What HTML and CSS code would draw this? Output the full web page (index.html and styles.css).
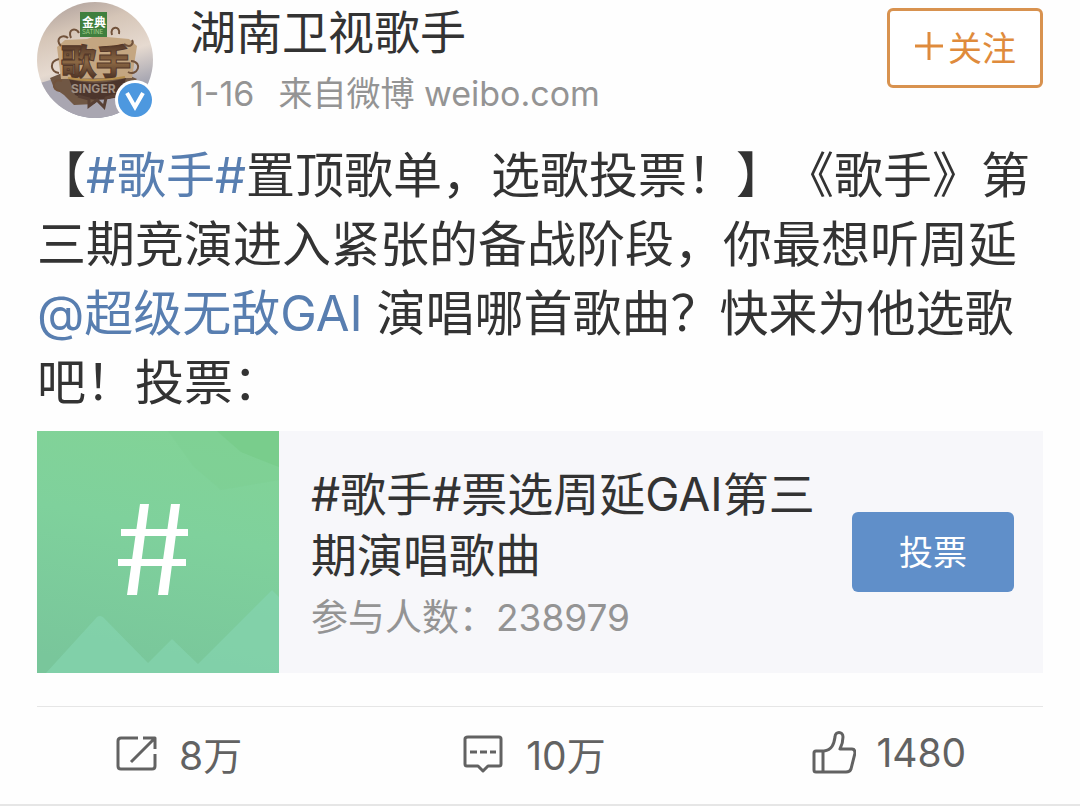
FILE: index.html
```
<!DOCTYPE html>
<html lang="zh-CN">
<head>
  <meta charset="UTF-8">
  <meta name="viewport" content="width=device-width, initial-scale=1.0">
  <title>湖南卫视歌手</title>
  <link rel="stylesheet" href="styles.css">
</head>
<body>
  <article class="post">
    <header class="post-header">
      <div class="avatar">
        <svg class="avatar-image" viewBox="0 0 116 116" aria-hidden="true">
          <defs>
            <linearGradient id="sky" x1="0" y1="0" x2="0.3" y2="1">
              <stop offset="0" stop-color="#a99b98"/>
              <stop offset="0.3" stop-color="#d5c5b7"/>
              <stop offset="0.6" stop-color="#e6dad0"/>
              <stop offset="1" stop-color="#8d91a5"/>
            </linearGradient>
            <linearGradient id="bronze" x1="0" y1="0" x2="0" y2="1">
              <stop offset="0" stop-color="#4b3024"/>
              <stop offset="0.5" stop-color="#8c6844"/>
              <stop offset="1" stop-color="#3c241c"/>
            </linearGradient>
            <clipPath id="round"><circle cx="58" cy="58" r="58"/></clipPath>
          </defs>
          <g clip-path="url(#round)">
            <rect width="116" height="116" fill="url(#sky)"/>
            <path d="M0 82l20-6 20 14 30 6 46-12v32H0z" fill="#a9a6b1"/>
            <path d="M13 76l12-5 66 2 9 4-13 12-20 3-10 10-20 1-10-10-10-7z" fill="#705744"/>
            <path d="M20 45l8-7 22-1 8-3 12 1 22 2 8 7-5 32-71 1z" fill="#c4a681"/>
            <path d="M24 44c-7-7 2-13 7-8M34 36c-4-9 5-11 8-5M75 33c-3-9 9-10 7-1M87 42c7 5 10-1 8-4M22 57c-10 2-9 13 0 14M94 59c13 1 6 16-3 11M25 79c-10-4-11 10-2 10" fill="none" stroke="#71523b" stroke-width="2"/>
            <path d="M32 77q27 8 57-1l-5 18q-24 8-46-1z" fill="#4c352c"/>
            <path d="M41 94l11 3v7l8-6 7 7 2-9 10-3" fill="none" stroke="#584035" stroke-width="3"/>
            <text class="logo-title" x="24" y="73">歌手</text>
            <path d="M31 76q28 5 57-1" fill="none" stroke="#b58e4c" stroke-width="2"/>
            <text class="logo-sub" x="34" y="91">SINGER</text>
            <rect x="43" y="10" width="27" height="25" fill="#3f7f3e"/>
            <text class="logo-brand" x="45" y="25">金典</text>
            <text class="logo-small" x="45" y="32">SATINE</text>
          </g>
        </svg>
        <svg class="badge" viewBox="0 0 40 40" aria-hidden="true">
          <circle cx="20" cy="20" r="20" fill="#fff"/>
          <circle cx="20" cy="20" r="17" fill="#4d98df"/>
          <path d="M12 13l8 14 8-14" fill="none" stroke="#fff" stroke-width="4"/>
        </svg>
      </div>
      <div class="author">
        <h1 class="author-name">湖南卫视歌手</h1>
        <p class="post-meta"><span>1-16</span><span>来自微博 weibo.com</span></p>
      </div>
      <button class="follow-button" type="button">
        <svg class="plus-icon" viewBox="0 0 30 30" aria-hidden="true">
          <path d="M15 1v28M1 15h28"/>
        </svg>关注
      </button>
    </header>

    <p class="post-text">【<a href="#topic">#歌手#</a>置顶歌单，选歌投票！】《歌手》第三期竞演进入紧张的备战阶段，你最想听周延<a href="#user">@超级无敌GAI</a> 演唱哪首歌曲？快来为他选歌吧！投票：</p>

    <section class="vote-card">
      <svg class="vote-cover" viewBox="0 0 242 242" aria-hidden="true">
        <defs>
          <linearGradient id="green" x1="0.6" y1="0" x2="0.4" y2="1">
            <stop offset="0" stop-color="#82d397"/>
            <stop offset="0.4" stop-color="#7fd19c"/>
            <stop offset="1" stop-color="#79c69b"/>
          </linearGradient>
        </defs>
        <rect width="242" height="242" fill="url(#green)"/>
        <path d="M131 0l26 36 27 23 58-10V0z" fill="#7ccd8e" opacity="0.3"/>
        <path d="M180 0l24 21 38 15V0z" fill="#74c983" opacity="0.5"/>
        <path d="M9 242l51-56q3-2 6 0l45 46 24-24 26 25 74-74 7 7v76z" fill="#84d3ad" opacity="0.75"/>
        <path d="M103 73h9l-12 91h-10zM134 73h9l-12 91h-10zM84 98h67v7H84zM81 128h68v7H81z" fill="#fff"/>
      </svg>
      <div class="vote-info">
        <h2 class="vote-title">#歌手#票选周延GAI第三期演唱歌曲</h2>
        <p class="vote-count">参与人数：238979</p>
      </div>
      <button class="vote-button" type="button">投票</button>
    </section>

    <hr class="divider">

    <footer class="actions">
      <button class="action" type="button">
        <svg class="action-icon" viewBox="0 0 44 44" aria-hidden="true">
          <path d="M23 7H6q-3 0-3 3v25q0 3 3 3h31q3 0 3-3V23M28 7h12v11M40 7L16 31"/>
        </svg>8万
      </button>
      <button class="action" type="button">
        <svg class="action-icon" viewBox="0 0 44 44" aria-hidden="true">
          <path d="M6 6h31q2 0 2 2v25q0 2-2 2H26l-5 5-5-5H5q-2 0-2-2V8q0-2 3-2z"/>
          <path d="M8 21h7M18 21h7M28 21h6"/>
        </svg>10万
      </button>
      <button class="action" type="button">
        <svg class="action-icon" viewBox="0 0 44 44" aria-hidden="true">
          <path d="M4 20h8c8-1 10-7 11-14 0-6 8-6 8 0 0 4-1 8-3 12h12q3 0 3 4l-4 16q-1 3-5 3H4q-2 0-2-2V22q0-2 2-2zM11 20v21"/>
        </svg>1480
      </button>
    </footer>
  </article>
</body>
</html>
```
FILE: styles.css
```
* {
  box-sizing: border-box;
}

body {
  margin: 0;
  background-color: #fefefe;
  color: #333;
  font-family: Inter, "Noto Sans CJK SC", sans-serif;
  text-spacing-trim: space-all;
}

h1, h2, p {
  margin: 0;
  font-weight: 400;
}

button {
  font-family: inherit;
  cursor: pointer;
}

a {
  color: #587eb0;
  text-decoration: none;
}

.post {
  padding: 0 37px;
  border-bottom: 2px solid #e6e6e6;
}

.post-header {
  display: flex;
  align-items: flex-start;
  height: 141px;
}

.avatar {
  position: relative;
  flex: none;
  width: 116px;
  margin-top: 2px;
}

.avatar-image {
  display: block;
  width: 100%;
}

.badge {
  position: absolute;
  right: -2px;
  bottom: -2px;
  width: 40px;
  height: 40px;
}

.logo-title {
  font-size: 35px;
  font-weight: 900;
  fill: url(#bronze);
  stroke: #543829;
}

.logo-sub {
  font-size: 12px;
  font-weight: 700;
  fill: #a09084;
}

.logo-brand {
  font-size: 12px;
  font-weight: 700;
  fill: #fff;
}

.logo-small {
  font-size: 6px;
  fill: #a8cf8f;
}

.author {
  flex: 1;
  padding-left: 37px;
}

.author-name {
  font-size: 46px;
  line-height: 64px;
}

.post-meta {
  display: flex;
  gap: 24px;
  font-size: 34px;
  line-height: 60px;
  color: #949494;
}

.follow-button {
  display: flex;
  align-items: center;
  justify-content: center;
  gap: 4px;
  width: 156px;
  height: 80px;
  margin-top: 8px;
  padding: 0 0 4px;
  border: 3px solid #d8924f;
  border-radius: 6px;
  background-color: #fff;
  color: #df8b3c;
  font-size: 34px;
}

.plus-icon {
  width: 30px;
  height: 30px;
  fill: none;
  stroke: currentColor;
  stroke-width: 3;
}

.post-text {
  font-size: 49px;
  line-height: 69px;
}

.vote-card {
  display: flex;
  align-items: center;
  margin-top: 14px;
  padding-right: 29px;
  background-color: #f7f7fa;
}

.vote-cover {
  flex: none;
  width: 242px;
  height: 242px;
}

.vote-info {
  flex: 1;
  padding: 10px 0 0 32px;
}

.vote-title {
  font-size: 46px;
  line-height: 61px;
}

.vote-count {
  font-size: 37px;
  line-height: 64px;
  color: #949494;
}

.vote-button {
  flex: none;
  width: 162px;
  height: 80px;
  margin-left: 32px;
  padding: 0 0 4px;
  border: none;
  border-radius: 6px;
  background-color: #608fc9;
  color: #fff;
  font-size: 34px;
}

.divider {
  margin: 33px 0 0;
  border: none;
  border-top: 1px solid #e6e6e6;
}

.actions {
  display: flex;
  margin: 0 -24px 0 -36px;
}

.action {
  display: flex;
  flex: 1;
  align-items: center;
  justify-content: center;
  gap: 20px;
  height: 97px;
  padding: 0 0 6px;
  border: none;
  background: none;
  color: #626262;
  font-size: 39px;
}

.action-icon {
  width: 44px;
  height: 44px;
  fill: none;
  stroke: currentColor;
  stroke-width: 3;
  stroke-linejoin: round;
}
```
